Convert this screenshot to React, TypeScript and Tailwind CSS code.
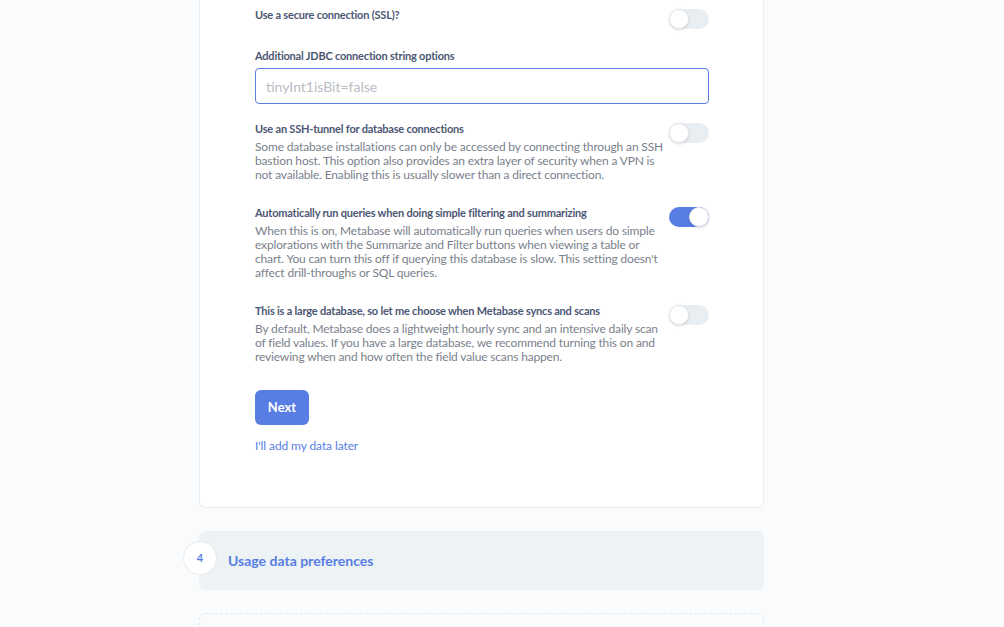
import React from "react";

function Toggle({ on }: { on?: boolean }) {
  return (
    <div
      className={`relative mt-px h-5 w-10 shrink-0 rounded-full ${on ? "bg-[#587ee3]" : "bg-[#e9eef2]"}`}
    >
      <div
        className={`absolute top-0 h-5 w-5 rounded-full border border-[#e4e8ec] bg-white shadow-[0_1px_3px_rgba(0,0,0,0.15)] ${on ? "right-0 border-[#587ee3]" : "left-0"}`}
      />
    </div>
  );
}

function Row({ label, desc, on }: { label: string; desc: string; on?: boolean }) {
  return (
    <div className="flex items-start justify-between">
      <div className="w-[410px]">
        <div className="mb-1 text-[11px] font-bold leading-[14px] tracking-[-0.2px] text-[#4c5773]">{label}</div>
        <div className="text-[12px] leading-[14px] tracking-[-0.16px] text-[#7a7f8c]">{desc}</div>
      </div>
      <Toggle on={on} />
    </div>
  );
}

export default function App() {
  return (
    <div
      className="min-h-[627px] w-full overflow-hidden bg-[#f9fbfc] pl-[199px]"
      style={{ fontFamily: "Lato, 'Noto Sans', sans-serif" }}
    >
      <div className="flex w-[565px] flex-col">
        <div className="rounded-b-md border border-t-0 border-[#eceff1] bg-white pb-[54px] pl-[55px] pr-[54px] pt-2">
          <div className="mb-5 flex items-start justify-between">
            <div className="text-[11px] font-bold leading-[14px] tracking-[-0.2px] text-[#4c5773]">
              Use a secure connection (SSL)?
            </div>
            <Toggle />
          </div>
          <div className="mb-[5px] text-[11px] font-bold leading-[14px] tracking-[-0.2px] text-[#4c5773]">
            Additional JDBC connection string options
          </div>
          <div className="mb-[18px] flex h-9 items-center rounded-[4px] border border-[#587ee3] px-[10px] text-[14px] text-[#b9bcc4]">
            tinyInt1isBit=false
          </div>
          <div className="flex flex-col gap-6">
            <Row
              label="Use an SSH-tunnel for database connections"
              desc="Some database installations can only be accessed by connecting through an SSH bastion host. This option also provides an extra layer of security when a VPN is not available. Enabling this is usually slower than a direct connection."
            />
            <Row
              on
              label="Automatically run queries when doing simple filtering and summarizing"
              desc="When this is on, Metabase will automatically run queries when users do simple explorations with the Summarize and Filter buttons when viewing a table or chart. You can turn this off if querying this database is slow. This setting doesn't affect drill-throughs or SQL queries."
            />
            <Row
              label="This is a large database, so let me choose when Metabase syncs and scans"
              desc="By default, Metabase does a lightweight hourly sync and an intensive daily scan of field values. If you have a large database, we recommend turning this on and reviewing when and how often the field value scans happen."
            />
          </div>
          <button className="mt-[26px] flex h-[35px] w-[54px] items-center justify-center rounded-md bg-[#587ee3] text-[13px] font-bold text-white">
            Next
          </button>
          <div className="mt-[14px] text-[12px] leading-[14px] tracking-[-0.1px] text-[#587ee3]">I'll add my data later</div>
        </div>

        <div className="relative mt-[23px] flex h-[59px] items-center rounded-md bg-[#edf2f5] pl-[29px]">
          <div className="absolute left-[-16px] top-[10px] flex h-[34px] w-[34px] items-center justify-center rounded-full border border-[#e8ecef] bg-white text-[11px] font-bold text-[#587ee3]">
            4
          </div>
          <div className="text-[14px] font-bold text-[#587ee3]">Usage data preferences</div>
        </div>

        <div className="mt-[23px] h-[60px] rounded-md border border-dashed border-[#e4e8eb] bg-[#f9fbfc]" />
      </div>
    </div>
  );
}
